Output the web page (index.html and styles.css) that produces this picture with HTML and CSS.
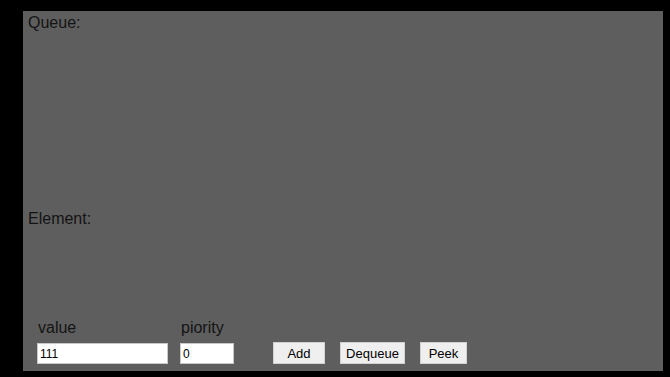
FILE: index.html
```html
<!DOCTYPE html>
<html lang="en">
	<head>
		<meta charset="utf-8">
		<title>Priority Queue</title>
		<link rel="stylesheet" href="styles.css">
	</head>
	<body>
		<div id="panel">
			<div id="queue">Queue:</div>
			<div id="element">Element:</div>
			<div id="controls">
				<div class="field">
					<label for="value">value</label>
					<input type="text" id="value" value="111">
				</div>
				<div class="field">
					<label for="priority">piority</label>
					<input type="text" id="priority" value="0">
				</div>
				<button id="add">Add</button>
				<button id="dequeue">Dequeue</button>
				<button id="peek">Peek</button>
			</div>
		</div>
	</body>
</html>
```

FILE: styles.css
```css
* {
	margin: 0px;
	padding: 0px;
	box-sizing: border-box;
}

body {
	background-color: rgb(0, 0, 0);
	font-family: "Liberation Sans", Arial, sans-serif;
}

#panel {
	width: 640px;
	height: 360px;
	margin: 11px 0 0 23px;
	background-color: rgb(94, 94, 94);
	color: rgb(20, 20, 20);
	font-size: 16px;
	display: flex;
	flex-direction: column;
}

#queue {
	height: 198px;
	padding: 3px 0 0 5px;
}

#element {
	height: 108px;
	padding: 1px 0 0 5px;
}

#controls {
	display: flex;
	align-items: flex-end;
	padding-left: 14px;
}

.field {
	display: flex;
	flex-direction: column;
	gap: 6px;
	margin-right: 12px;
}

.field label {
	padding: 2px 0 0 1px;
	line-height: 18px;
}

.field input {
	height: 21px;
	border: 1px solid rgb(200, 200, 200);
	background-color: rgb(255, 255, 255);
	font-family: "Liberation Sans", Arial, sans-serif;
	font-size: 12px;
	padding-left: 2px;
	color: rgb(0, 0, 0);
}

#value {
	width: 131px;
}

#priority {
	width: 54px;
}

button {
	height: 22px;
	background-color: rgb(239, 239, 239);
	border: 1px solid rgb(210, 210, 210);
	font-family: "Liberation Sans", Arial, sans-serif;
	font-size: 13px;
	color: rgb(0, 0, 0);
}

#add {
	width: 52px;
	margin-left: 27px;
}

#dequeue {
	width: 65px;
	margin-left: 15px;
}

#peek {
	width: 47px;
	margin-left: 15px;
}
```
